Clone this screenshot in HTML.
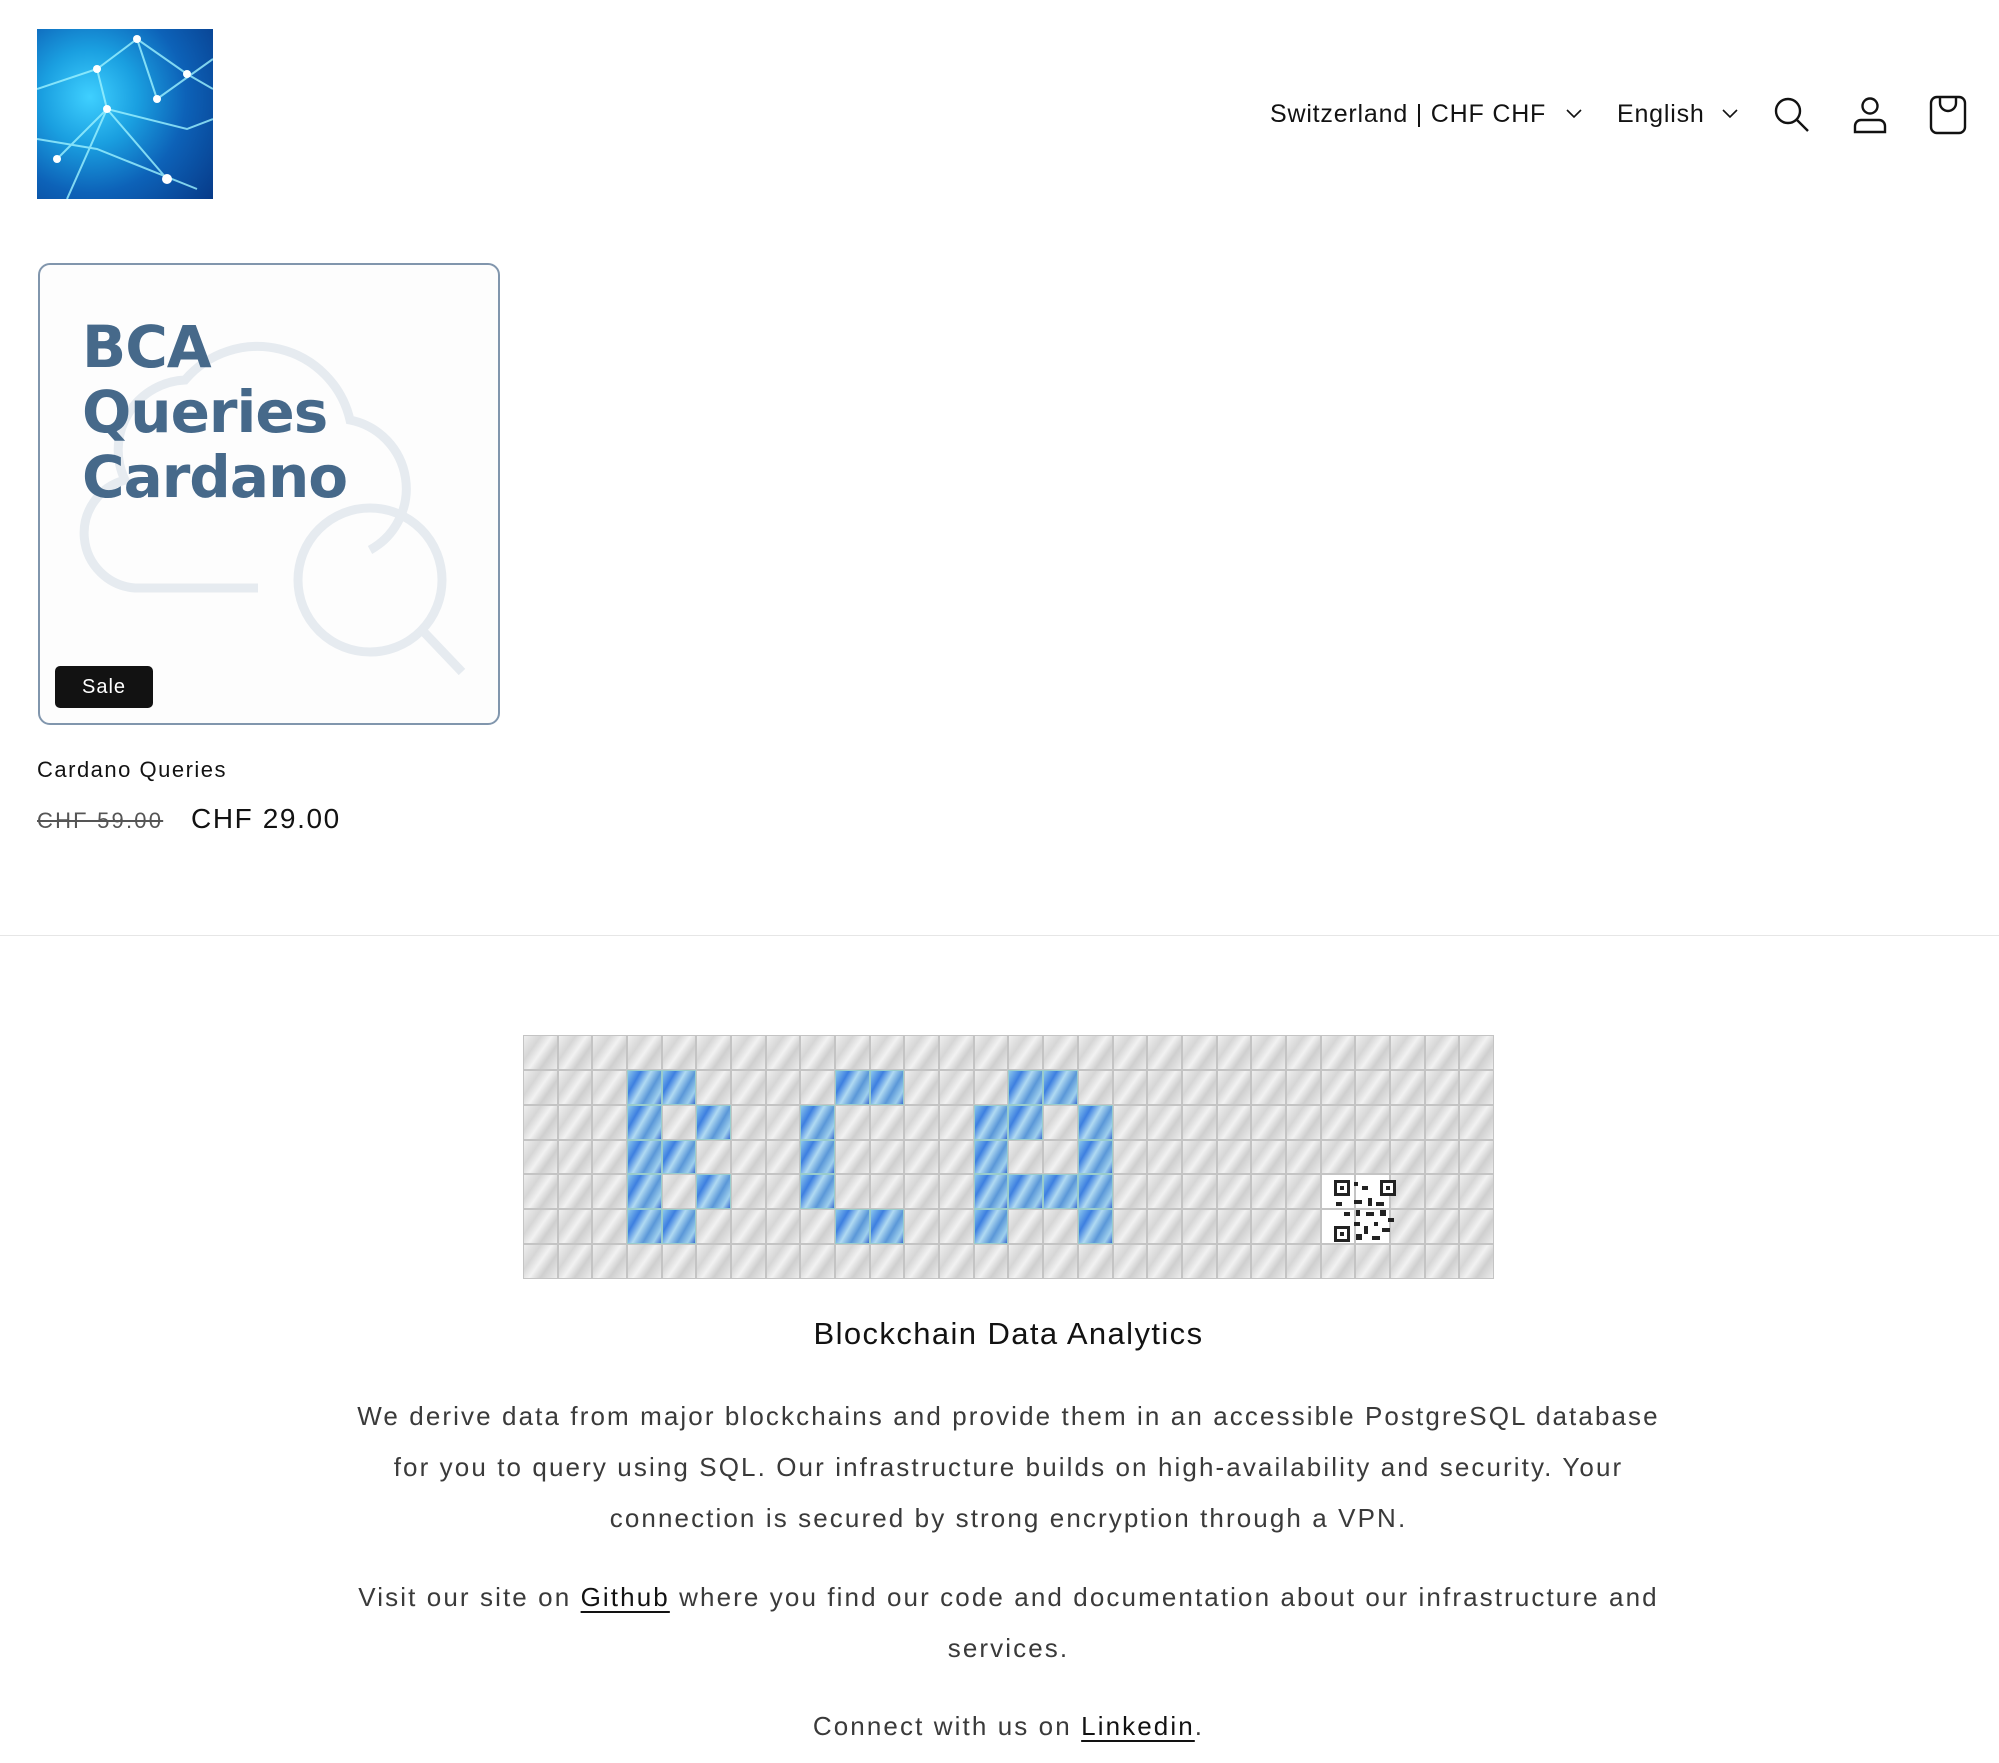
<!DOCTYPE html>
<html><head><meta charset="utf-8"><style>
*{margin:0;padding:0;box-sizing:border-box}
body{width:1999px;height:1763px;background:#fff;font-family:"Liberation Sans",Arial,sans-serif;color:#121212;position:relative;overflow:hidden}
.abs{position:absolute}
.logo{left:37px;top:29px;width:176px;height:170px;background:radial-gradient(circle at 30% 40%,#3fd0ff 0,#1a9fe0 30%,#0d62b8 60%,#073a88 100%);overflow:hidden}
.nav{top:100px;font-size:25px;letter-spacing:.8px;color:#121212}
.card{left:38px;top:263px;width:462px;height:462px;border:2px solid #8196ad;border-radius:12px;background:#fdfdfd;overflow:hidden}
.title{left:42px;top:50px;font-size:58px;font-weight:bold;color:#46698a;line-height:65px;font-family:"DejaVu Sans","Liberation Sans",sans-serif;letter-spacing:-1px}
.sale{left:55px;top:666px;width:98px;height:42px;background:#121212;color:#fff;border-radius:5px;font-size:20px;text-align:center;line-height:42px;letter-spacing:1px}
.banner{left:523px;top:1035px;width:971px;height:244px;display:grid;grid-template-columns:repeat(28,1fr);grid-template-rows:repeat(7,1fr);background:#ddd}
.banner div{border:1px solid #c4c4c4;background:linear-gradient(125deg,#eee 0,#d6d6d6 30%,#f2f2f2 50%,#cfcfcf 70%,#ececec 100%)}
.banner div.b{background:linear-gradient(120deg,#8cc8ee,#3d7fe0 25%,#b0daf2 45%,#5a97d8 65%,#9fd0ee 85%,#3a6cd0);border-color:#9cc}
.banner div.q{background:#fff}
.c{text-align:center;left:9px;width:1999px;font-size:26px;color:#3a3a3a;letter-spacing:2.1px}
a{color:#121212;text-decoration:underline;text-underline-offset:5px}
</style></head><body>
<div class="abs logo"><svg width="176" height="170"><g stroke="#9ef3ff" stroke-width="2" fill="none" opacity=".8"><path d="M0 60L60 40 100 10 150 45 176 60M20 130L70 80 150 100 176 90M60 40L70 80 130 150M100 10L120 70 176 30M0 110L60 120 160 160M30 170L70 80"/></g><g fill="#fff"><circle cx="60" cy="40" r="4"/><circle cx="100" cy="10" r="4"/><circle cx="150" cy="45" r="4"/><circle cx="70" cy="80" r="4"/><circle cx="120" cy="70" r="4"/><circle cx="130" cy="150" r="5"/><circle cx="20" cy="130" r="4"/></g></svg></div>
<div class="abs nav" style="left:1270px">Switzerland | CHF CHF</div>
<svg class="abs" style="left:1566px;top:109px" width="16" height="10"><path d="M1 1l7 7 7-7" stroke="#121212" stroke-width="1.6" fill="none"/></svg>
<div class="abs nav" style="left:1617px">English</div>
<svg class="abs" style="left:1722px;top:109px" width="16" height="10"><path d="M1 1l7 7 7-7" stroke="#121212" stroke-width="1.6" fill="none"/></svg>
<svg class="abs" style="left:1774px;top:97px" width="36" height="36"><circle cx="14" cy="14" r="12" stroke="#121212" stroke-width="2.4" fill="none"/><path d="M23 23l11 11" stroke="#121212" stroke-width="2.4"/></svg>
<svg class="abs" style="left:1852px;top:96px" width="36" height="38"><circle cx="18" cy="10" r="7.5" stroke="#121212" stroke-width="2.4" fill="none"/><path d="M3 36V30a6 6 0 0 1 6-6h18a6 6 0 0 1 6 6v6z" stroke="#121212" stroke-width="2.4" fill="none"/></svg>
<svg class="abs" style="left:1929px;top:95px" width="38" height="40"><rect x="2" y="2" width="34" height="36" rx="6" stroke="#121212" stroke-width="2.4" fill="none"/><path d="M11 3v5a8 8 0 0 0 16 0V3" stroke="#121212" stroke-width="2.4" fill="none"/></svg>

<div class="abs card">
<svg class="abs" style="left:0;top:0" width="462" height="462"><g stroke="#e6ebf0" stroke-width="9" fill="none"><path d="M218 323H95a55 55 0 0 1-10-108 70 70 0 0 1 60-100 95 95 0 0 1 165 40 70 70 0 0 1 20 130"/><circle cx="330" cy="315" r="72"/><path d="M382 365l40 42"/></g></svg>
<div class="abs title">BCA<br>Queries<br>Cardano</div>
</div>
<div class="abs sale">Sale</div>
<div class="abs" style="left:37px;top:757px;font-size:22px;letter-spacing:1.5px">Cardano Queries</div>
<div class="abs" style="left:37px;top:808px;font-size:22px;color:#555;text-decoration:line-through;letter-spacing:2.2px">CHF 59.00</div>
<div class="abs" style="left:191px;top:803px;font-size:28px;letter-spacing:1.6px">CHF 29.00</div>
<div class="abs" style="left:0;top:935px;width:1999px;height:1px;background:#e6e6e6"></div>

<div class="abs banner" id="bn"></div>
<script>
var blue={1:[3,4,9,10,14,15],2:[3,5,8,13,14,16],3:[3,4,8,13,16],4:[3,5,8,13,14,15,16],5:[3,4,9,10,13,16]};
var h='';for(var r=0;r<7;r++)for(var c=0;c<28;c++){var cl='';if(blue[r]&&blue[r].indexOf(c)>=0)cl='b';if((r==4||r==5)&&(c==23||c==24))cl='q';h+='<div class="'+cl+'"></div>';}
document.getElementById('bn').innerHTML=h;
</script>
<svg class="abs" style="left:1332px;top:1178px" width="66" height="66"><g fill="#222"><rect x="2" y="2" width="16" height="16"/><rect x="48" y="2" width="16" height="16"/><rect x="2" y="48" width="16" height="16"/></g><g fill="#fff"><rect x="5" y="5" width="10" height="10"/><rect x="51" y="5" width="10" height="10"/><rect x="5" y="51" width="10" height="10"/></g><g fill="#222"><rect x="8" y="8" width="4" height="4"/><rect x="54" y="8" width="4" height="4"/><rect x="8" y="54" width="4" height="4"/><path d="M22 4h4v4h-4zM30 8h6v4h-6zM22 22h8v4h-8zM36 20h4v8h-4zM44 24h8v4h-8zM4 24h6v4H4zM24 32h4v6h-4zM34 34h8v4h-8zM48 32h6v6h-6zM22 44h6v4h-6zM32 48h4v8h-4zM42 44h4v4h-4zM50 50h8v4h-8zM24 56h6v6h-6zM40 58h8v4h-8zM56 40h6v4h-6zM12 34h6v4h-6z"/></g></svg>

<div class="abs" style="left:9px;width:1999px;top:1316px;text-align:center;font-size:31px;color:#121212;letter-spacing:1.4px">Blockchain Data Analytics</div>
<div class="abs c" style="top:1391px;line-height:51px">We derive data from major blockchains and provide them in an accessible PostgreSQL database<br>for you to query using SQL. Our infrastructure builds on high-availability and security. Your<br>connection is secured by strong encryption through a VPN.</div>
<div class="abs c" style="top:1572px;line-height:51px">Visit our site on <a>Github</a> where you find our code and documentation about our infrastructure and<br>services.</div>
<div class="abs c" style="top:1711px">Connect with us on <a>Linkedin</a>.</div>
</body></html>
